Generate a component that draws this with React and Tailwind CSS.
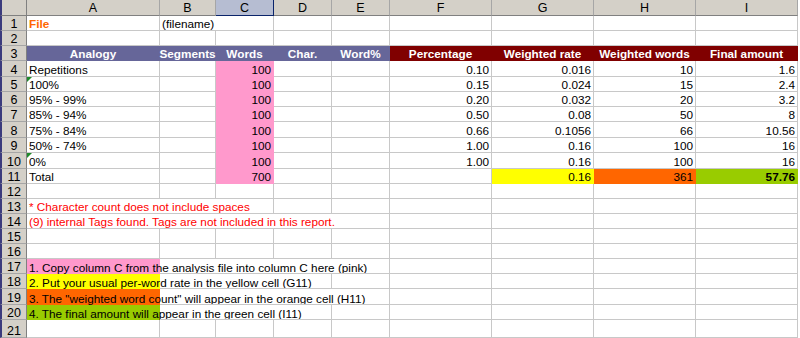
import React from "react";

const GRID = "grid grid-cols-[27px_133px_56px_58px_58px_58px_102px_102px_102px_102px]";
const SPAN = { 1: "col-span-1", 2: "col-span-2", 3: "col-span-3", 4: "col-span-4", 5: "col-span-5" };
const HEIGHT = { 15: "h-[15px]", 16: "h-[16px]", 18: "h-[18px]" };

const fills = {
  purple: "bg-[#666699] border-[#666699] text-white font-bold",
  maroon: "bg-[#800000] border-[#800000] text-white font-bold",
  pink: "bg-[#ff99cc] border-[#ff99cc]",
  yellow: "bg-[#ffff00] border-[#ffff00]",
  orange: "bg-[#ff6600] border-[#ff6600]",
  green: "bg-[#99cc00] border-[#99cc00]",
};

const instrFills = {
  pink: "bg-[#ff99cc]",
  yellow: "bg-[#ffff00]",
  orange: "bg-[#ff6600]",
  green: "bg-[#99cc00]",
};

const heights = [15, 15, 15, 16, 15, 15, 15, 16, 15, 16, 15, 15, 15, 15, 15, 15, 15, 15, 16, 15, 18];

const analysis = [
  ["Repetitions", "0.10", "0.016", "10", "1.6"],
  ["100%", "0.15", "0.024", "15", "2.4", true],
  ["95% - 99%", "0.20", "0.032", "20", "3.2"],
  ["85% - 94%", "0.50", "0.08", "50", "8"],
  ["75% - 84%", "0.66", "0.1056", "66", "10.56"],
  ["50% - 74%", "1.00", "0.16", "100", "16"],
  ["0%", "1.00", "0.16", "100", "16", true],
];

const instructions = [
  ["1. Copy column C from the analysis file into column C here (pink)", "pink", 5],
  ["2. Put your usual per-word rate in the yellow cell (G11)", "yellow", 4],
  ['3. The "weighted word count" will appear in the orange cell (H11)', "orange", 5],
  ["4. The final amount will appear in the green cell (I11)", "green", 4],
];

function Cell({ children, span = 1, align, fill, cls = "", flag }) {
  const justify = align === "r" ? "justify-end" : align === "c" ? "justify-center" : "justify-start";
  return (
    <div
      className={`${SPAN[span]} relative flex items-end ${justify} px-[2px] border-b border-r whitespace-nowrap ${
        fill ? fills[fill] : "border-[#c8c8c8]"
      } ${cls}`}
    >
      {flag && (
        <span className="absolute left-0 top-0 w-0 h-0 border-t-[5px] border-r-[5px] border-t-[#1f8a2a] border-r-transparent" />
      )}
      {children}
    </div>
  );
}

function Empty({ n }) {
  return Array.from({ length: n }).map((_, i) => <Cell key={"e" + i} />);
}

function RowHead({ n }) {
  return (
    <div className="flex items-end justify-center text-[12.5px] border-l-2 border-l-[#3b3b7d] border-r border-r-[#808080] border-b border-b-[#a6a6a6] bg-[#d4d0c8] text-black">
      {n}
    </div>
  );
}

function Row({ n, children }) {
  return (
    <div className={`${GRID} ${HEIGHT[heights[n - 1]]}`}>
      <RowHead n={n} />
      {children}
    </div>
  );
}

function Instruction({ text, fill, span }) {
  return (
    <div className={`${SPAN[span]} flex`}>
      <div className={`w-[133px] shrink-0 flex items-end px-[2px] whitespace-nowrap ${instrFills[fill]}`}>{text}</div>
      <div className="flex-1 border-b border-r border-[#c8c8c8]" />
    </div>
  );
}

export default function App() {
  const letters = ["A", "B", "C", "D", "E", "F", "G", "H", "I"];

  return (
    <div className="w-[800px] h-[338px] overflow-hidden bg-white font-['Liberation_Sans',Arial,sans-serif] text-[11.75px] leading-[12px] text-black">
      {/* column letters */}
      <div className={`${GRID} h-[16px] text-[12.5px]`}>
        <div className="border-l-2 border-l-[#3b3b7d] border-r border-b border-[#808080] bg-[#d4d0c8]" />
        {letters.map((l) => (
          <div
            key={l}
            className={`flex items-center justify-center border-r border-b ${
              l === "C" ? "bg-[#b6bdd2] border-[#0a246a]" : "bg-[#d4d0c8] border-r-[#a6a6a6] border-b-[#808080]"
            }`}
          >
            {l}
          </div>
        ))}
      </div>

      <Row n={1}>
        <Cell cls="text-[#ff6600] font-bold">File</Cell>
        <Cell span={2}>(filename)</Cell>
        <Empty n={6} />
      </Row>
      <Row n={2}>
        <Empty n={9} />
      </Row>
      <Row n={3}>
        <Cell fill="purple" align="c">Analogy</Cell>
        <Cell fill="purple" align="c">Segments</Cell>
        <Cell fill="purple" align="c">Words</Cell>
        <Cell fill="purple" align="c">Char.</Cell>
        <Cell fill="purple" align="c">Word%</Cell>
        <Cell fill="maroon" align="c">Percentage</Cell>
        <Cell fill="maroon" align="c">Weighted rate</Cell>
        <Cell fill="maroon" align="c">Weighted words</Cell>
        <Cell fill="maroon" align="c">Final amount</Cell>
      </Row>

      {analysis.map(([label, pct, rate, words, amount, flag], i) => (
        <Row key={label} n={i + 4}>
          <Cell flag={flag}>{label}</Cell>
          <Cell />
          <Cell fill="pink" align="r">100</Cell>
          <Cell />
          <Cell />
          <Cell align="r">{pct}</Cell>
          <Cell align="r">{rate}</Cell>
          <Cell align="r">{words}</Cell>
          <Cell align="r">{amount}</Cell>
        </Row>
      ))}

      <Row n={11}>
        <Cell>Total</Cell>
        <Cell />
        <Cell fill="pink" align="r">700</Cell>
        <Cell />
        <Cell />
        <Cell />
        <Cell fill="yellow" align="r">0.16</Cell>
        <Cell fill="orange" align="r">361</Cell>
        <Cell fill="green" align="r" cls="font-bold">57.76</Cell>
      </Row>
      <Row n={12}>
        <Empty n={9} />
      </Row>
      <Row n={13}>
        <Cell span={3} cls="text-[#ff0000]">* Character count does not include spaces</Cell>
        <Empty n={6} />
      </Row>
      <Row n={14}>
        <Cell span={5} cls="text-[#ff0000]">(9) internal Tags found. Tags are not included in this report.</Cell>
        <Empty n={4} />
      </Row>
      <Row n={15}>
        <Empty n={9} />
      </Row>
      <Row n={16}>
        <Empty n={9} />
      </Row>

      {instructions.map(([text, fill, span], i) => (
        <Row key={fill} n={17 + i}>
          <Instruction text={text} fill={fill} span={span} />
          <Empty n={9 - span} />
        </Row>
      ))}

      <Row n={21}>
        <Empty n={9} />
      </Row>
    </div>
  );
}
